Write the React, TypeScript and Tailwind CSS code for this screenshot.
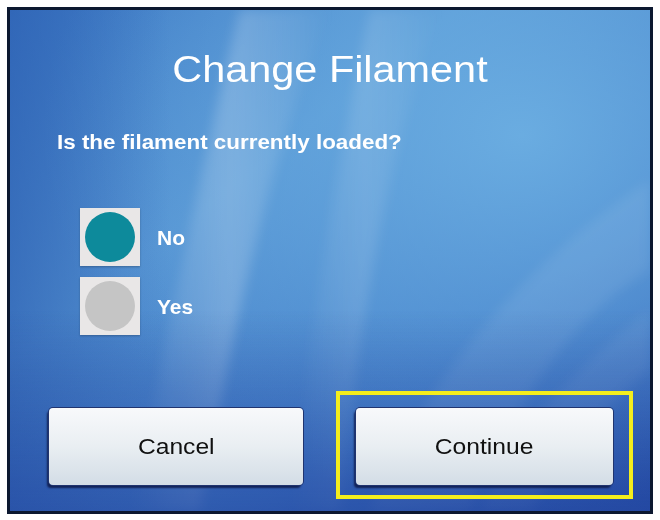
import React from "react";

const font = { fontFamily: '"Liberation Sans", Arial, Helvetica, sans-serif' };

function Wallpaper() {
  return (
    <svg
      className="absolute inset-0 h-full w-full"
      viewBox="0 0 640 501"
      preserveAspectRatio="none"
      aria-hidden="true"
    >
      <defs>
        <linearGradient id="base" x1="0" y1="0" x2="1" y2="1">
          <stop offset="0" stopColor="#3c78c4" />
          <stop offset="0.35" stopColor="#5593d2" />
          <stop offset="0.7" stopColor="#3f78c6" />
          <stop offset="1" stopColor="#2b55ad" />
        </linearGradient>
        <radialGradient id="glow" cx="0.8" cy="0.25" r="0.75">
          <stop offset="0" stopColor="#72b6e6" stopOpacity="0.8" />
          <stop offset="0.55" stopColor="#6aaee2" stopOpacity="0.45" />
          <stop offset="1" stopColor="#6aaee2" stopOpacity="0" />
        </radialGradient>
        <linearGradient id="band" x1="0" y1="0" x2="1" y2="0">
          <stop offset="0" stopColor="#ffffff" stopOpacity="0" />
          <stop offset="0.5" stopColor="#ffffff" stopOpacity="0.2" />
          <stop offset="1" stopColor="#ffffff" stopOpacity="0" />
        </linearGradient>
        <linearGradient id="bottom" x1="0" y1="0" x2="0" y2="1">
          <stop offset="0" stopColor="#1f3f9a" stopOpacity="0" />
          <stop offset="1" stopColor="#1f3f9a" stopOpacity="0.55" />
        </linearGradient>
        <linearGradient id="left" x1="0" y1="0" x2="1" y2="0">
          <stop offset="0" stopColor="#2a5cb0" stopOpacity="0.6" />
          <stop offset="1" stopColor="#2a5cb0" stopOpacity="0" />
        </linearGradient>
        <filter id="soft" x="-20%" y="-20%" width="140%" height="140%">
          <feGaussianBlur stdDeviation="6" />
        </filter>
      </defs>
      <rect width="640" height="501" fill="url(#base)" />
      <rect width="640" height="501" fill="url(#glow)" />
      <rect width="160" height="501" fill="url(#left)" />
      {/* sweeping light ribbons */}
      <g filter="url(#soft)">
        <path d="M230 0 C 200 120, 170 260, 120 501 L 190 501 C 230 280, 270 120, 320 0 Z" fill="url(#band)" />
        <path d="M360 0 C 330 140, 300 300, 280 501 L 330 501 C 350 300, 380 140, 430 0 Z" fill="url(#band)" opacity="0.6" />
        <path d="M640 170 C 520 250, 420 360, 360 501 L 460 501 C 510 380, 570 300, 640 260 Z" fill="#ffffff" opacity="0.08" />
        <path d="M640 300 C 560 360, 500 430, 470 501 L 520 501 C 560 440, 600 390, 640 360 Z" fill="#ffffff" opacity="0.07" />
      </g>
      <rect y="300" width="640" height="201" fill="url(#bottom)" />
    </svg>
  );
}

function RadioBox({ selected }: { selected: boolean }) {
  return (
    <div className="flex h-[58px] w-[60px] items-center justify-center bg-[#e9e7e7] shadow-[0_1px_2px_rgba(0,0,0,0.25)]">
      <div
        className={
          selected
            ? "h-[50px] w-[50px] rounded-full bg-[#0d8a9b]"
            : "h-[50px] w-[50px] rounded-full bg-[#c5c5c5]"
        }
      />
    </div>
  );
}

function Option({ label, selected }: { label: string; selected: boolean }) {
  return (
    <div className="flex items-center gap-[17px]">
      <RadioBox selected={selected} />
      <span className="text-[21px] font-bold leading-none text-white">{label}</span>
    </div>
  );
}

function PanelButton({ label }: { label: string }) {
  return (
    <button className="flex h-[77px] items-center justify-center rounded-[4px] bg-gradient-to-b from-[#f8f9fb] via-[#e9eef2] to-[#d3dde6] shadow-[-2px_3px_2px_rgba(12,24,70,0.85)] ring-1 ring-[#20346f]">
      <span className="inline-block scale-x-[1.12] text-[22px] leading-none text-[#111111]">{label}</span>
    </button>
  );
}

export default function App() {
  return (
    <div className="h-[520px] w-[660px] bg-white pl-[7px] pt-[7px]" style={font}>
      <div className="relative box-border h-[507px] w-[646px] overflow-hidden border-[3px] border-[#0c1830]">
        <Wallpaper />
        <div className="relative flex h-full flex-col">
          <h1 className="mt-[42px] origin-center scale-x-[1.15] text-center text-[36px] leading-none text-white">
            Change Filament
          </h1>
          <p className="ml-[47px] mt-[44px] origin-left scale-x-[1.12] text-[20px] font-bold leading-none text-white">
            Is the filament currently loaded?
          </p>
          <div className="ml-[70px] mt-[56px] flex flex-col gap-[11px]">
            <Option label="No" selected />
            <Option label="Yes" selected={false} />
          </div>
          <div className="mt-[56px] flex items-start">
            <div className="ml-[39px] mt-[17px] flex w-[254px] flex-col">
              <PanelButton label="Cancel" />
            </div>
            <div className="ml-[33px] flex w-[297px] flex-col border-4 border-[#f4ee1c] pb-[10px] pl-[16px] pr-[16px] pt-[13px]">
              <PanelButton label="Continue" />
            </div>
          </div>
        </div>
      </div>
    </div>
  );
}
